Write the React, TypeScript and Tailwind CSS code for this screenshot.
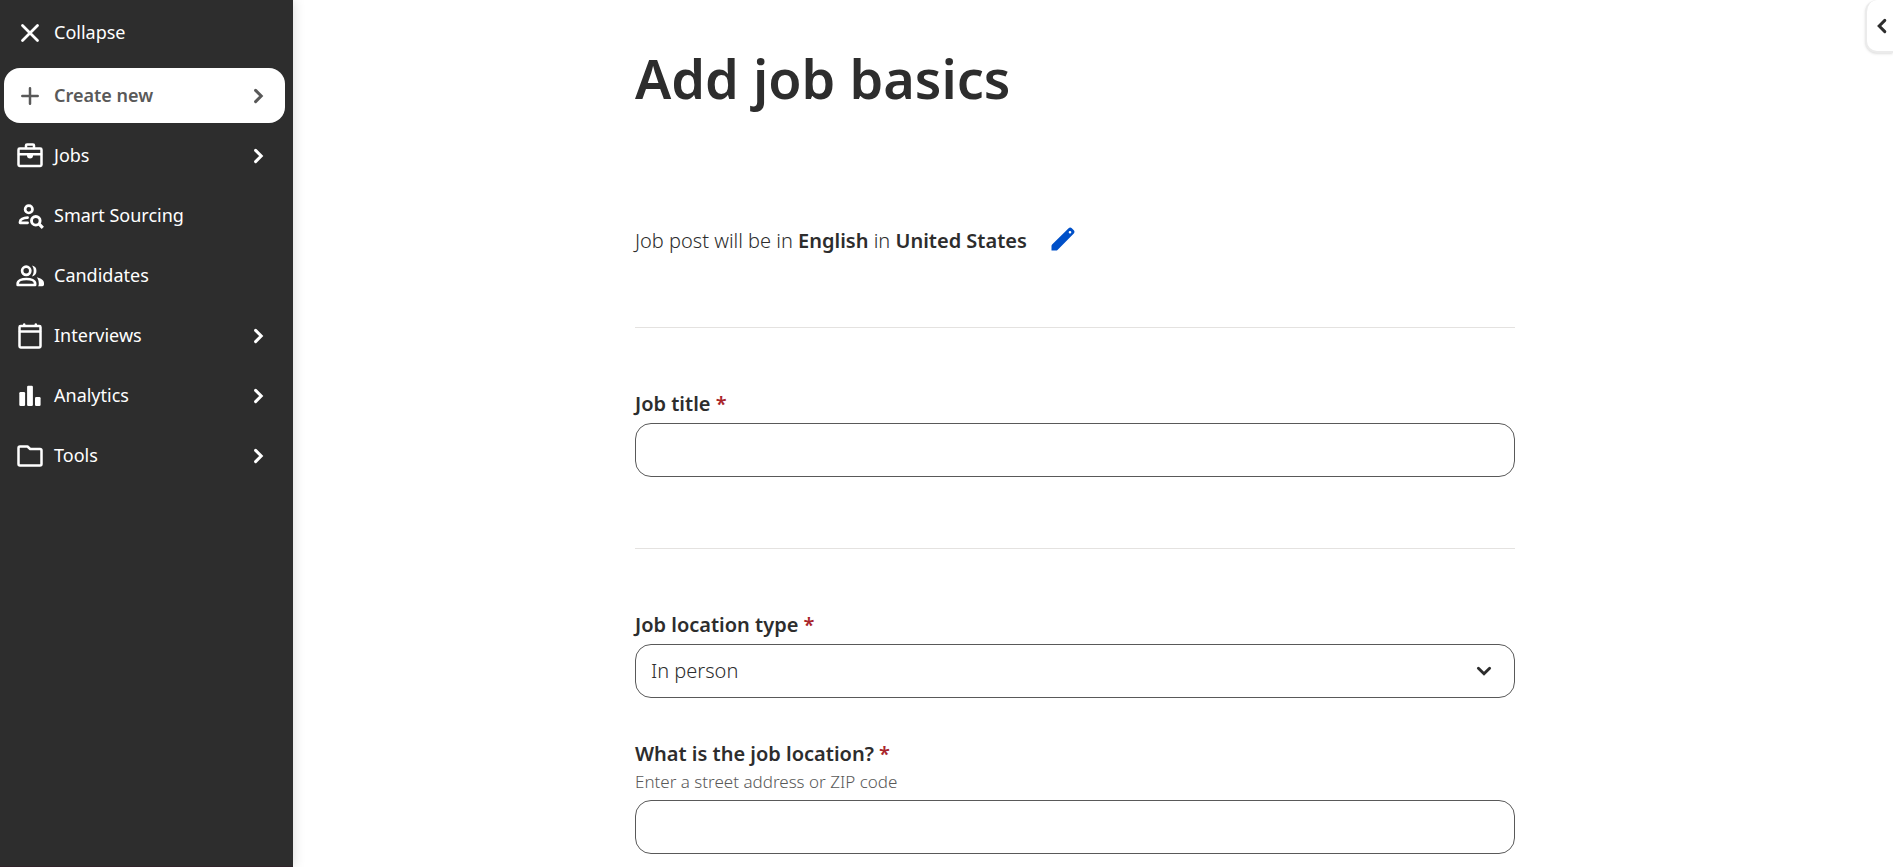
import { useState, type ReactNode } from "react"

type NavItem = {
  label: string
  icon: ReactNode
  hasMenu: boolean
}

function Icon({ children }: { children: ReactNode }) {
  return (
    <svg className="w-7 h-7 shrink-0" viewBox="0 0 28 28" fill="none" stroke="currentColor" strokeWidth={2.5} strokeLinecap="round" strokeLinejoin="round" aria-hidden="true">
      {children}
    </svg>
  )
}

function Chevron() {
  return (
    <svg className="w-4 h-4 shrink-0" viewBox="0 0 16 16" fill="none" stroke="currentColor" strokeWidth={3} strokeLinecap="round" strokeLinejoin="miter" aria-hidden="true">
      <path d="M5.600 2.400 11.200 8l-5.600 5.600" />
    </svg>
  )
}

const navItems: NavItem[] = [
  {
    label: "Jobs",
    hasMenu: true,
    icon: (
      <Icon>
        <rect x="2.500" y="6.500" width="23" height="17.500" rx="1.200" />
        <path d="M10 6V3.500a1 1 0 0 1 1-1h6a1 1 0 0 1 1 1V6M3 12.300h22" />
        <path d="M11 12.500h6v1a3 3 0 0 1-6 0z" fill="currentColor" stroke="none" />
      </Icon>
    ),
  },
  {
    label: "Smart Sourcing",
    hasMenu: false,
    icon: (
      <Icon>
        <circle cx="12.800" cy="7.300" r="3.700" strokeWidth={2.700} />
        <path d="M11.600 15.600c-4.200.2-7.600 1.900-7.600 4.400v.800h7.600" strokeWidth={2.700} />
        <circle cx="19.800" cy="18.800" r="4.300" strokeWidth={2.900} />
        <path d="m23.200 22.200 3.600 3.600" strokeWidth={3.200} strokeLinecap="butt" />
      </Icon>
    ),
  },
  {
    label: "Candidates",
    hasMenu: false,
    icon: (
      <Icon>
        <circle cx="10.200" cy="8.800" r="4.100" strokeWidth={2.700} />
        <path d="M1.700 23v-1.500c0-2.900 4-4.500 8.700-4.500s8.700 1.600 8.700 4.500V23z" strokeWidth={2.700} />
        <path d="M16 3.600a5.500 5.500 0 0 1 0 10.800c2.300-3.100 2.300-7.700 0-10.800zM20.800 15.300c4.200.9 7.200 2.900 7.200 5.900v1.400c0 1-.8 1.700-1.700 1.700h-4.200c.5-.7.7-1.500.7-2.400 0-2.600-.6-4.900-2-6.600z" fill="currentColor" stroke="none" />
      </Icon>
    ),
  },
  {
    label: "Interviews",
    hasMenu: true,
    icon: (
      <Icon>
        <rect x="3.500" y="4" width="21" height="21.500" rx="1.200" />
        <path d="M4 9.500h20M8.200 3.500v-1M19.800 3.500v-1" />
      </Icon>
    ),
  },
  {
    label: "Analytics",
    hasMenu: true,
    icon: (
      <Icon>
        <g fill="currentColor" stroke="none">
          <rect x="3.300" y="10" width="5.800" height="14" rx="1.200" />
          <rect x="11.100" y="3.800" width="5.800" height="20.200" rx="1.200" />
          <rect x="19" y="15" width="5.600" height="9" rx="1.200" />
        </g>
      </Icon>
    ),
  },
  {
    label: "Tools",
    hasMenu: true,
    icon: (
      <Icon>
        <path d="M2.500 6a1.500 1.500 0 0 1 1.500-1.500h7.500L14.200 7H24a1.500 1.500 0 0 1 1.500 1.500V22a1.500 1.500 0 0 1-1.500 1.500H4A1.500 1.500 0 0 1 2.500 22z" />
      </Icon>
    ),
  },
]

const navRow = "flex h-[55px] w-full items-center gap-[10px] rounded-2xl pl-3 pr-[19px] text-left"
const navLabel = "flex-1 pb-0.5"
const fieldBox = "w-full h-[54px] rounded-2xl border border-[#595959] bg-white px-[15px] text-xl text-[#2d2d2d]"
const labelText = "text-xl leading-7 font-semibold"

function Required() {
  return <span className="text-[#a9252b]">*</span>
}

export default function App() {
  const [title, setTitle] = useState("")
  const [locationType, setLocationType] = useState("In person")
  const [address, setAddress] = useState("")

  return (
    <div className="relative flex min-h-screen overflow-x-hidden bg-white font-['Noto_Sans','Open_Sans',sans-serif] text-[#2d2d2d]">
      {/* Sidebar */}
      <nav className="w-[293px] shrink-0 border-b border-[#30232a] bg-[#2d2d2d] pl-1 pr-2 pt-[5px] text-lg text-white shadow-[0_0_12px_rgba(0,0,0,0.16)]">
        <button type="button" className={navRow}>
          <Icon>
            <path d="m6.500 6.500 15 15M21.500 6.500l-15 15" strokeWidth={2.800} />
          </Icon>
          <span className={navLabel}>Collapse</span>
        </button>
        <button type="button" className={`${navRow} mt-2 bg-white font-semibold text-[#595959]`}>
          <Icon>
            <path d="M14 6.300v15.400M6.300 14h15.400" />
          </Icon>
          <span className={navLabel}>Create new</span>
          <Chevron />
        </button>
        <ul className="mt-[5px] flex flex-col gap-[5px]">
          {navItems.map((item) => (
            <li key={item.label}>
              <a href="#" className={navRow}>
                {item.icon}
                <span className={navLabel}>{item.label}</span>
                {item.hasMenu && <Chevron />}
              </a>
            </li>
          ))}
        </ul>
      </nav>

      {/* Form */}
      <main className="flex-1 pr-9">
        <form className="mx-auto w-full max-w-[880px] pt-10">
          <h1 className="text-[54px] leading-[76px] font-semibold">Add job basics</h1>

          <div className="mt-[109px] flex items-center gap-6">
            <p className="text-xl leading-8 font-[350]">
              Job post will be in <b className="font-semibold">English</b> in <b className="font-semibold">United States</b>
            </p>
            <button type="button" aria-label="Edit language and country" className="pb-1 text-[#0050c8]">
              <svg className="w-6 h-6" viewBox="0 0 24 24" fill="currentColor" aria-hidden="true">
                <path fillRule="evenodd" d="M.5 23.500v-4.600c0-.5.200-1 .6-1.400L17.600 1.200c.9-.9 2.300-.9 3.200 0l2 2c.9.9.9 2.300 0 3.200L6.500 22.900c-.4.4-.9.600-1.400.6zM17.700 5.200a1.300 1.300 0 1 0 2.600 0 1.300 1.300 0 0 0-2.600 0z" />
              </svg>
            </button>
          </div>

          <hr className="mt-[70px] border-[#e4e2e0]" />

          <div className="mt-[62px]">
            <label htmlFor="job-title" className={`${labelText} block`}>
              Job title <Required />
            </label>
            <input id="job-title" type="text" required className={`${fieldBox} mt-[5px] block`} value={title} onChange={(e) => setTitle(e.target.value)} />
          </div>

          <hr className="mt-[71px] border-[#e4e2e0]" />

          <div className="mt-[62px]">
            <label htmlFor="location-type" className={`${labelText} block`}>
              Job location type <Required />
            </label>
            <div className="relative mt-[5px]">
              <select id="location-type" required className={`${fieldBox} block appearance-none font-[350]`} value={locationType} onChange={(e) => setLocationType(e.target.value)}>
                <option>In person</option>
                <option>Fully remote</option>
                <option>Hybrid</option>
                <option>On the road</option>
              </select>
              <svg className="pointer-events-none absolute right-[23px] top-[19px] w-4 h-4" viewBox="0 0 16 16" fill="none" stroke="currentColor" strokeWidth={2.900} strokeLinecap="round" aria-hidden="true">
                <path d="M2.400 5.200 8 10.800l5.600-5.600" />
              </svg>
            </div>
          </div>

          <div className="mt-[42px]">
            <label htmlFor="job-location" className={`${labelText} block`}>
              What is the job location? <Required />
            </label>
            <p id="job-location-hint" className="text-[17px] leading-7 font-[350] text-[#595959]">Enter a street address or ZIP code</p>
            <input id="job-location" type="text" required aria-describedby="job-location-hint" className={`${fieldBox} mt-1 block`} value={address} onChange={(e) => setAddress(e.target.value)} />
          </div>
        </form>
      </main>

      {/* Preview drawer handle */}
      <button type="button" aria-label="Open preview" className="absolute right-0 top-0 flex h-[53px] w-7 items-center rounded-l-xl border-2 border-r-0 border-t-0 border-[#ebebeb] bg-white pl-[7px] shadow-sm">
        <svg className="w-4 h-4" viewBox="0 0 16 16" fill="none" stroke="currentColor" strokeWidth={3} strokeLinecap="round" aria-hidden="true">
          <path d="M10.800 2.400 5.200 8l5.600 5.600" />
        </svg>
      </button>
    </div>
  )
}
